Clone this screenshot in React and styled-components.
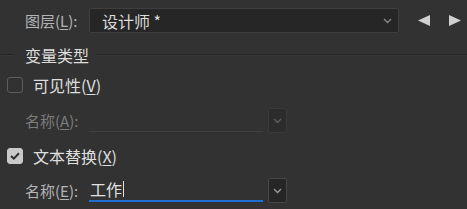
import React from 'react';
import styled, { createGlobalStyle } from 'styled-components';

const Global = createGlobalStyle`
  html, body { margin: 0; padding: 0; background: #323232; }
  body {
    font-family: "Noto Sans CJK SC", "Noto Sans", sans-serif;
    font-size: 16px;
    color: #d9d9d9;
    width: 467px;
    height: 209px;
    overflow: hidden;
  }
`;

const Panel = styled.div`
  display: flex;
  flex-direction: column;
  padding-top: 8px;
`;

const FieldRow = styled.div`
  display: flex;
  align-items: center;
  height: 25px;
  padding-left: 25px;
  margin-top: ${p => p.$top || 0}px;
`;

const Label = styled.span`
  width: 64px;
  flex: none;
  white-space: nowrap;
  font-size: 15px;
  color: ${p => (p.$disabled ? '#7b7b7b' : '#b4b4b4')};
  line-height: 1;
  u { text-decoration-thickness: 1px; text-underline-offset: 2px; }
`;

const Select = styled.div`
  width: 310px;
  height: 25px;
  box-sizing: border-box;
  border: 1px solid #3f3f3f;
  border-radius: 2px;
  background: #262626;
  display: flex;
  align-items: center;
  padding: 0 6px 0 12px;
  color: #dcdcdc;
`;

const SelectText = styled.span`
  flex: 1;
  line-height: 1;
`;

const NavButtons = styled.div`
  display: flex;
  align-items: center;
  gap: 19px;
  margin-left: 19px;
`;

const Separator = styled.div`
  display: flex;
  align-items: center;
  height: 19px;
  margin-top: 12px;
`;

const Rule = styled.div`
  height: 1px;
  background: #242424;
  box-shadow: 0 1px 0 #393939;
  width: ${p => (p.$w ? `${p.$w}px` : 'auto')};
  flex: ${p => (p.$w ? 'none' : 1)};
`;

const SectionTitle = styled.span`
  margin: 0 7px 0 11px;
  color: #dedede;
  line-height: 1;
`;

const CheckRow = styled.label`
  display: flex;
  align-items: center;
  height: 20px;
  padding-left: 7px;
  margin-top: ${p => p.$top}px;
  gap: 10px;
  color: #dedede;
  line-height: 1;
  u { text-decoration-thickness: 1px; text-underline-offset: 2px; }
`;

const Box = styled.span`
  width: 16px;
  height: 16px;
  box-sizing: border-box;
  border-radius: 3px;
  border: 1.5px solid ${p => (p.$checked ? '#c9c9c9' : '#5d5d5d')};
  background: ${p => (p.$checked ? '#c9c9c9' : 'transparent')};
  display: flex;
  align-items: center;
  justify-content: center;
`;

const Input = styled.div`
  width: 174px;
  height: 24px;
  box-sizing: border-box;
  border-bottom: ${p => (p.$active ? '2px solid #1f6fd6' : '1px solid #3f3f3f')};
  display: flex;
  align-items: center;
  padding-left: 1px;
  color: #e0e0e0;
  line-height: 1;
  margin-top: -1px;
`;

const Caret = styled.span`
  width: 1px;
  height: 16px;
  background: #e0e0e0;
  margin-left: 1px;
`;

const DropButton = styled.div`
  width: 19px;
  height: 25px;
  margin-left: 5px;
  box-sizing: border-box;
  border: 1px solid ${p => (p.$disabled ? '#3a3a3a' : '#474747')};
  border-radius: 2px;
  background: ${p => (p.$disabled ? '#2c2c2c' : '#262626')};
  display: flex;
  align-items: center;
  justify-content: center;
`;

const Chevron = ({ color }) => (
  <svg width="9" height="6" viewBox="0 0 9 6">
    <polyline points="1,1 4.5,4.5 8,1" fill="none" stroke={color} strokeWidth="1.3" />
  </svg>
);

const Tri = ({ dir }) => (
  <svg width="12" height="11" viewBox="0 0 12 11">
    {dir === 'left' ? (
      <polygon points="12,0 12,11 0,5.5" fill="#d0d0d0" />
    ) : (
      <polygon points="0,0 0,11 12,5.5" fill="#d0d0d0" />
    )}
  </svg>
);

const Check = () => (
  <svg width="10" height="8" viewBox="0 0 10 8">
    <polyline points="1,4 3.8,6.6 9,1.2" fill="none" stroke="#2e2e2e" strokeWidth="2" />
  </svg>
);

export default function App() {
  return (
    <>
      <Global />
      <Panel>
        <FieldRow>
          <Label>图层(<u>L</u>):</Label>
          <Select>
            <SelectText>设计师 *</SelectText>
            <Chevron color="#8a8a8a" />
          </Select>
          <NavButtons>
            <Tri dir="left" />
            <Tri dir="right" />
          </NavButtons>
        </FieldRow>

        <Separator>
          <Rule $w={14} />
          <SectionTitle>变量类型</SectionTitle>
          <Rule />
        </Separator>

        <CheckRow $top={11}>
          <Box />
          <span>可见性(<u>V</u>)</span>
        </CheckRow>

        <FieldRow $top={13}>
          <Label $disabled>名称(<u>A</u>):</Label>
          <Input />
          <DropButton $disabled>
            <Chevron color="#5e5e5e" />
          </DropButton>
        </FieldRow>

        <CheckRow $top={13}>
          <Box $checked>
            <Check />
          </Box>
          <span>文本替换(<u>X</u>)</span>
        </CheckRow>

        <FieldRow $top={12}>
          <Label>名称(<u>E</u>):</Label>
          <Input $active>
            工作<Caret />
          </Input>
          <DropButton>
            <Chevron color="#9a9a9a" />
          </DropButton>
        </FieldRow>
      </Panel>
    </>
  );
}
